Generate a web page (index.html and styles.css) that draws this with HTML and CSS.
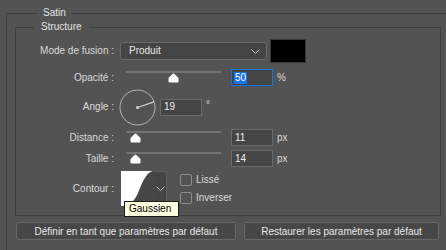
FILE: index.html
```html
<!DOCTYPE html>
<html lang="fr">
<head>
  <meta charset="UTF-8">
  <title>Satin</title>
  <link rel="stylesheet" href="styles.css">
</head>
<body>
  <fieldset class="group outer">
    <legend>Satin</legend>

    <fieldset class="group inner">
      <legend>Structure</legend>

      <div class="row row-mode">
        <label class="lbl">Mode de fusion :</label>
        <div class="select">
          <span>Produit</span>
          <svg class="chevron" width="9" height="5" viewBox="0 0 9 5"><path d="M0.5 0.5 L4.5 4.5 L8.5 0.5" fill="none" stroke="#c8c8c8" stroke-width="1"/></svg>
        </div>
        <div class="swatch"></div>
      </div>

      <div class="row row-slider">
        <label class="lbl">Opacité :</label>
        <div class="slider">
          <div class="track"></div>
          <svg class="thumb" style="left: 48px" width="11" height="10" viewBox="0 0 11 10"><path d="M5.5 0.5 Q6 0.5 6.5 1 L10.5 5 L10.5 8.5 Q10.5 9.5 9.5 9.5 L1.5 9.5 Q0.5 9.5 0.5 8.5 L0.5 5 L4.5 1 Q5 0.5 5.5 0.5 Z" fill="#fff"/></svg>
        </div>
        <div class="field focus"><span class="sel">50</span></div>
        <span class="unit">%</span>
      </div>

      <div class="row row-angle">
        <label class="lbl">Angle :</label>
        <svg class="dial" width="37" height="37" viewBox="0 0 37 37">
          <circle cx="18.5" cy="18.5" r="17.5" fill="none" stroke="#b4b4b4" stroke-width="1"/>
          <line x1="18.5" y1="18.5" x2="35" y2="12.8" stroke="#d0d0d0" stroke-width="1.3"/>
          <circle cx="18.5" cy="18.5" r="1.6" fill="#d0d0d0"/>
        </svg>
        <div class="field">19</div>
        <span class="unit deg">°</span>
      </div>

      <div class="row row-slider">
        <label class="lbl">Distance :</label>
        <div class="slider">
          <div class="track"></div>
          <svg class="thumb" style="left: 10px" width="11" height="10" viewBox="0 0 11 10"><path d="M5.5 0.5 Q6 0.5 6.5 1 L10.5 5 L10.5 8.5 Q10.5 9.5 9.5 9.5 L1.5 9.5 Q0.5 9.5 0.5 8.5 L0.5 5 L4.5 1 Q5 0.5 5.5 0.5 Z" fill="#fff"/></svg>
        </div>
        <div class="field">11</div>
        <span class="unit">px</span>
      </div>

      <div class="row row-slider">
        <label class="lbl">Taille :</label>
        <div class="slider">
          <div class="track"></div>
          <svg class="thumb" style="left: 10px" width="11" height="10" viewBox="0 0 11 10"><path d="M5.5 0.5 Q6 0.5 6.5 1 L10.5 5 L10.5 8.5 Q10.5 9.5 9.5 9.5 L1.5 9.5 Q0.5 9.5 0.5 8.5 L0.5 5 L4.5 1 Q5 0.5 5.5 0.5 Z" fill="#fff"/></svg>
        </div>
        <div class="field">14</div>
        <span class="unit">px</span>
      </div>

      <div class="row row-contour">
        <label class="lbl">Contour :</label>
        <div class="contour">
          <svg class="curve" width="34" height="35" viewBox="0 0 34 35">
            <rect width="34" height="35" fill="#fff"/>
            <path d="M34 0 L32 0 C 26 1, 22 10, 19 17 C 16 25, 12 33, 5 35 L34 35 Z" fill="#474747"/>
          </svg>
          <div class="contour-drop">
            <svg width="9" height="5" viewBox="0 0 9 5"><path d="M0.5 0.5 L4.5 4.5 L8.5 0.5" fill="none" stroke="#b8b8b8" stroke-width="1"/></svg>
          </div>
          <div class="tooltip">Gaussien</div>
        </div>
        <div class="checks">
          <label class="check"><span class="box"></span>Lissé</label>
          <label class="check"><span class="box"></span>Inverser</label>
        </div>
      </div>
    </fieldset>

    <div class="buttons">
      <button class="btn btn-left">Définir en tant que paramètres par défaut</button>
      <button class="btn btn-right">Restaurer les paramètres par défaut</button>
    </div>
  </fieldset>
</body>
</html>
```

FILE: styles.css
```css
:root {
  --bg: #535353;
  --line: #3e3e3e;
  --field-bg: #454545;
  --field-border: #6a6a6a;
  --text: #d9d9d9;
  --accent: #1473e6;
}

html, body {
  margin: 0;
  height: 100%;
  overflow: hidden;
}

body {
  box-sizing: border-box;
  padding: 7px 0 0 6px;
  background: var(--bg);
  color: var(--text);
  font-family: "Liberation Sans", Arial, sans-serif;
  font-size: 10px;
  line-height: 12px;
}

.group {
  margin: 0;
  border: 1px solid var(--line);
  box-sizing: border-box;
}

.group legend {
  line-height: 12px;
  color: #e2e2e2;
}

/* the outer group runs off the right and bottom edges */
.outer {
  width: 440px;
  height: 243px;
  padding: 2px 0 0 8px;
  border-right: none;
  border-bottom: none;
}

.outer > legend {
  margin-left: 23px;
  padding: 0 5px;
}

.inner {
  width: 426px;
  padding: 6px 0 9px 0;
}

.inner > legend {
  margin-left: 18px;
  padding: 0 7px;
}

.row {
  display: flex;
  align-items: center;
}

.lbl {
  width: 98px;
  text-align: right;
  flex: none;
}

.row-mode {
  height: 24px;
}

.row-slider {
  height: 21px;
}

.row-mode + .row-slider {
  margin-top: 4px;
}

.row-angle {
  height: 36px;
  margin-top: 1px;
}

.row-angle + .row-slider {
  margin-top: 2px;
}

.row-contour {
  height: 35px;
  margin-top: 2px;
}

.select {
  margin-left: 6px;
  width: 147px;
  height: 18px;
  box-sizing: border-box;
  display: flex;
  align-items: center;
  justify-content: space-between;
  padding: 0 6px 0 8px;
  background: var(--field-bg);
  border: 1px solid var(--field-border);
  border-radius: 3px;
  color: #e6e6e6;
}

.swatch {
  margin-left: 3px;
  width: 36px;
  height: 24px;
  box-sizing: border-box;
  background: #000;
  border: 1px solid #383838;
}

.slider {
  position: relative;
  align-self: stretch;
  margin-left: 6px;
  width: 105px;
  flex: none;
}

.track {
  margin: 4px 0 0 6px;
  width: 95px;
  height: 2px;
  background: #737373;
}

.thumb {
  position: absolute;
  top: 6px;
}

.field {
  margin-left: 6px;
  width: 42px;
  height: 17px;
  box-sizing: border-box;
  padding: 0 0 0 3px;
  display: flex;
  align-items: center;
  background: var(--field-bg);
  border: 1px solid var(--field-border);
  color: #f0f0f0;
}

.field.focus {
  border-color: var(--accent);
  padding-left: 2px;
}

.sel {
  background: var(--accent);
  color: #fff;
  padding: 0 1px;
}

.unit {
  margin-left: 4px;
}

.unit.deg {
  align-self: flex-start;
  margin-top: 10px;
}

.dial {
  margin-left: 5px;
  flex: none;
}

.row-angle .field {
  margin-left: 4px;
}

.contour {
  position: relative;
  margin-left: 7px;
  display: flex;
  height: 35px;
}

.contour-drop {
  width: 12px;
  box-sizing: border-box;
  display: flex;
  align-items: center;
  justify-content: center;
  background: var(--field-bg);
  border: 1px solid #5e5e5e;
  border-left: none;
}

.tooltip {
  position: absolute;
  left: 3px;
  top: 30px;
  padding: 1px 7px 1px 4px;
  background: #ffffe1;
  border: 1px solid #1a1a1a;
  color: #000;
  white-space: nowrap;
}

.checks {
  margin-left: 13px;
  display: flex;
  flex-direction: column;
  gap: 6px;
}

.check {
  display: flex;
  align-items: center;
  gap: 4px;
}

.box {
  width: 12px;
  height: 12px;
  box-sizing: border-box;
  border: 1px solid #8c8c8c;
  border-radius: 2px;
}

.buttons {
  display: flex;
  gap: 8px;
  margin: 6px 0 0 1px;
}

.btn {
  height: 18px;
  padding: 0;
  background: #474747;
  border: 1px solid #666;
  border-radius: 2px;
  color: #e8e8e8;
  font-family: inherit;
  font-size: 10px;
}

.btn-left {
  width: 220px;
}

.btn-right {
  width: 195px;
}
```
